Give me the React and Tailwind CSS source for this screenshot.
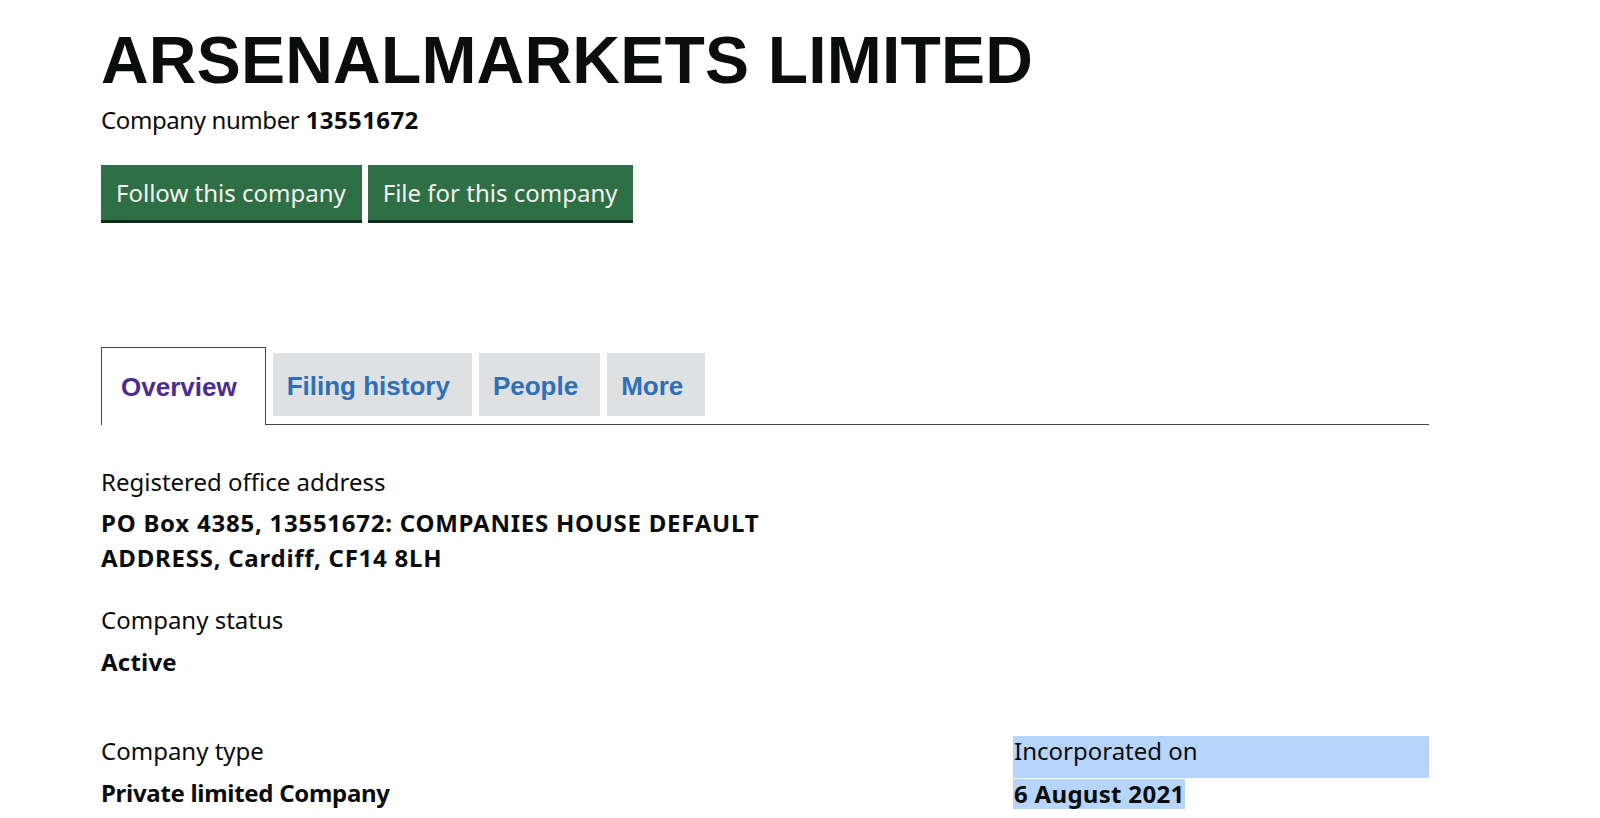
import React from "react";

const body = { fontFamily: '"Noto Sans", "Liberation Sans", Arial, sans-serif' };
const arial = { fontFamily: '"Liberation Sans", Arial, sans-serif' };

export default function App() {
  return (
    <div className="min-h-[818px] w-[1600px] bg-white text-[#0b0c0c]">
      <div className="ml-[101px] w-[1328px] pt-[27px]">
        <h1 className="text-[66px] font-bold leading-none tracking-[0.2px]" style={arial}>
          ARSENALMARKETS LIMITED
        </h1>
        <p className="mt-[12px] text-[24px] leading-[30px]" style={body}>
          <span className="tracking-[-0.4px]">Company number</span>{" "}
          <span className="font-bold tracking-[0.4px]">13551672</span>
        </p>

        <div className="mt-[30px] flex gap-[6px]" style={body}>
          <button className="h-[58px] border-b-[3px] border-[#0f2d19] bg-[#2f6f45] pl-[15px] pr-[16px] text-[24px] leading-none text-[#f2f2f2]">
            Follow this company
          </button>
          <button className="h-[58px] border-b-[3px] border-[#0f2d19] bg-[#2f6f45] pl-[15px] pr-[16px] text-[24px] leading-none text-[#f2f2f2]">
            File for this company
          </button>
        </div>

        <div className="mt-[124px] flex items-end gap-[7px] border-b border-[#454545]" style={arial}>
          <div className="-mb-px flex h-[78px] items-center border border-b-0 border-[#454545] bg-white pl-[19px] pr-[28px] pt-[2px] text-[26px] font-bold text-[#4c2c92]">
            Overview
          </div>
          <div className="mb-[8px] flex h-[63px] items-center bg-[#dee0e2] pl-[14px] pr-[22px] pt-[4px] text-[26px] font-bold text-[#2f6fb3]">
            Filing history
          </div>
          <div className="mb-[8px] flex h-[63px] items-center bg-[#dee0e2] pl-[14px] pr-[22px] pt-[4px] text-[26px] font-bold text-[#2f6fb3]">
            People
          </div>
          <div className="mb-[8px] flex h-[63px] items-center bg-[#dee0e2] pl-[14px] pr-[22px] pt-[4px] text-[26px] font-bold text-[#2f6fb3]">
            More
          </div>
        </div>

        <dl className="text-[24px]" style={body}>
          <dt className="mt-[42px] pb-[8px] leading-[30px]">Registered office address</dt>
          <dd className="max-w-[760px] font-bold leading-[35px] tracking-[0.75px]">
            PO Box 4385, 13551672: COMPANIES HOUSE DEFAULT ADDRESS, Cardiff, CF14 8LH
          </dd>
          <dt className="mt-[30px] pb-[9px] leading-[30px]">Company status</dt>
          <dd className="font-bold leading-[35px] tracking-[0.2px]">Active</dd>
        </dl>

        <div className="mt-[57px] flex text-[24px]" style={body}>
          <dl className="w-[912px]">
            <dt className="pb-[11px] leading-[30px]">Company type</dt>
            <dd className="font-bold leading-[32px] tracking-[-0.3px]">Private limited Company</dd>
          </dl>
          <dl className="flex-1">
            <dt className="bg-[#b7d4fb] pb-[12px] pl-[1px] leading-[30px]">Incorporated on</dt>
            <dd className="font-bold leading-[32px]">
              <span className="inline-block bg-[#b7d4fb] pl-[1px] pr-[1px] leading-[30px] tracking-[0.3px]">6 August 2021</span>
            </dd>
          </dl>
        </div>
      </div>
    </div>
  );
}
